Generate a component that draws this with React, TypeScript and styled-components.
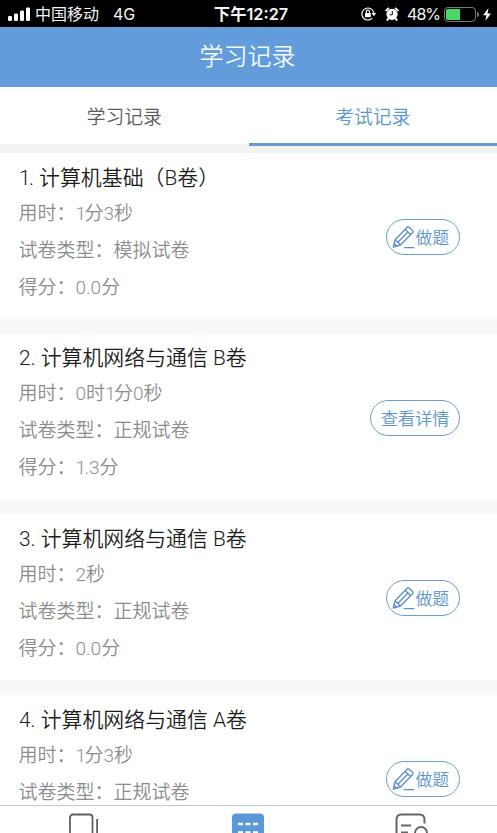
import React from 'react';
import styled, { createGlobalStyle } from 'styled-components';

const BLUE = '#629cdb';

const GlobalStyle = createGlobalStyle`
  * { box-sizing: border-box; }
  body { margin: 0; background: #fff; font-family: Roboto, "Noto Sans CJK SC", sans-serif; font-weight: 350; }
`;

const Screen = styled.div`
  width: 497px;
  height: 833px;
  overflow: hidden;
  display: flex;
  flex-direction: column;
  background: #f8f8f8;
`;

const StatusBar = styled.div`
  height: 27px;
  flex: none;
  display: grid;
  grid-template-columns: 1fr auto 1fr;
  align-items: center;
  padding: 1px 6px 0 8px;
  background: #000;
  color: #f4f4f4;
  font: 400 16px/26px Inter, "Noto Sans CJK SC", sans-serif;
`;

const StatusGroup = styled.div<{ $end?: boolean }>`
  display: flex;
  align-items: center;
  justify-content: ${p => (p.$end ? 'flex-end' : 'flex-start')};
`;

const Carrier = styled.span`
  margin: 0 14px 0 5px;
`;

const Clock = styled.span`
  font-weight: 600;
  font-size: 16.3px;
  padding-left: 3px;
`;

const Percent = styled.span`
  margin: 0 4px 0 8px;
  font-size: 16px;
  letter-spacing: -1px;
`;

const Battery = styled.div`
  width: 32px;
  height: 15px;
  padding: 1px;
  border: 1px solid #777;
  border-radius: 4px;
`;

const Charge = styled.div`
  width: 14px;
  height: 11px;
  border-radius: 2px 0 0 2px;
  background: #4cd864;
`;

const BatteryTip = styled.div`
  width: 2px;
  height: 5px;
  margin: 0 4px 0 1px;
  border-radius: 0 2px 2px 0;
  background: #777;
`;

const Header = styled.header`
  height: 60px;
  flex: none;
  padding-right: 2px;
  text-align: center;
  background: ${BLUE};
  color: #f4fbff;
  font-size: 24px;
  line-height: 60.5px;
`;

const Tabs = styled.nav`
  height: 66px;
  flex: none;
  display: grid;
  grid-template-columns: 1fr 1fr;
  background: #f2f2f2;
`;

const Tab = styled.div<{ $active?: boolean }>`
  height: ${p => (p.$active ? 59 : 57)}px;
  background: #fff;
  border-bottom: ${p => (p.$active ? '3px solid #689bcf' : '0')};
  color: ${p => (p.$active ? '#5b98d0' : '#5c5c5c')};
  font-size: 18.8px;
  line-height: 62px;
  text-align: center;
`;

const List = styled.main`
  flex: 1;
  min-height: 0;
  overflow: hidden;
  display: flex;
  flex-direction: column;
  gap: 14.7px;
`;

const Card = styled.article`
  height: 166px;
  flex: none;
  display: flex;
  justify-content: space-between;
  align-items: center;
  padding: 0 37px 0 18.5px;
  background: #fff;
`;

const Info = styled.div`
  align-self: flex-start;
  white-space: nowrap;
`;

const Title = styled.h2`
  margin: 8.5px 0 0 0.5px;
  height: 33px;
  font-size: 20.9px;
  line-height: 32px;
  font-weight: 350;
  color: #1c1c1c;
`;

const Line = styled.div`
  height: 37px;
  font-size: 19px;
  line-height: 37px;
  color: #8c8c8c;
`;

const NarrowOne = styled.span`
  letter-spacing: -1.6px;
`;

const ActionButton = styled.button`
  height: 36px;
  display: flex;
  align-items: center;
  margin-top: 2px;
  padding: 0 10px 0 5px;
  border: 1.5px solid #6d9fd2;
  border-radius: 18px;
  background: #fff;
  color: #5b95cf;
  font: 350 16.8px/32px "Noto Sans CJK SC", sans-serif;
`;

const DetailButton = styled(ActionButton)`
  padding: 0 9.5px;
  font-size: 17.2px;
`;

const BottomBar = styled.footer`
  height: 28px;
  flex: none;
  display: grid;
  grid-template-columns: repeat(3, 1fr);
  justify-items: center;
  padding: 7px 2px 0 2px;
  border-top: 1px solid #c5c5c5;
  background: #fff;
  overflow: hidden;
`;

const Signal = () => (
  <svg width="22" height="14" viewBox="0 0 22 14" fill="#fff">
    <rect x="0" y="9" width="4" height="5" rx="1.2" />
    <rect x="6" y="6.5" width="4" height="7.5" rx="1.2" />
    <rect x="12" y="3.5" width="4" height="10.5" rx="1.2" />
    <rect x="18" y="0.5" width="4" height="13.5" rx="1.2" />
  </svg>
);

const RotationLock = () => (
  <svg width="16" height="14" viewBox="0 0 16 14" fill="none" stroke="#fff" strokeWidth="1.2">
    <path d="M12.8 6A6 6 0 1 0 11.2 11.2" />
    <path d="M10.5 6H15.2L12.8 9.2Z" fill="#fff" stroke="none" />
    <rect x="4" y="6" width="5.8" height="4.3" rx=".5" fill="#fff" stroke="none" />
    <path d="M5.3 6V4.8a1.6 1.6 0 0 1 3.2 0V6" />
  </svg>
);

const AlarmSvg = styled.svg`
  margin-left: 8px;
`;

const Alarm = () => (
  <AlarmSvg width="14" height="14" viewBox="0 0 14 14" fill="none">
    <circle cx="7" cy="7.3" r="5.6" fill="#fff" />
    <path d="M1.2 3.4 3.4 1.4M12.8 3.4 10.6 1.4M3.4 11.5 2.4 12.9M10.6 11.5 11.6 12.9" stroke="#fff" strokeWidth="1.9" strokeLinecap="round" />
    <path d="M7.3 4v3.8H4.6" stroke="#000" strokeWidth="1" />
  </AlarmSvg>
);

const Bolt = () => (
  <svg width="8" height="13" viewBox="0 0 8 13" fill="#fff">
    <path d="M5.5 0 0 7.3h3.5L2.2 13 8 5.4H4.5Z" />
  </svg>
);

const Pencil = () => (
  <svg width="23" height="24" viewBox="0 0 23 24" fill="none" stroke="#5d91c7" strokeWidth="1.4" strokeLinejoin="round">
    <path d="M1.3 22 3.1 14.8 15.2 2.2Q16 1.4 17 2.2L20.8 5.6Q21.6 6.6 20.7 7.5L8.5 20Z" />
    <path d="M3.1 14.8 8.5 20M13.2 4.4l5.4 5.2M6 17.2 15.8 6.9M2 18.5l2.8 2.7M11.8 22.6h10.4" />
  </svg>
);

const BooksIcon = () => (
  <svg width="30" height="21" viewBox="0 0 30 21" fill="none" stroke="#606060" strokeWidth="1.8">
    <rect x="1" y="1.5" width="22.5" height="32" rx="3" />
    <path d="M28.1 6v24" />
  </svg>
);

const GridIcon = () => (
  <svg width="32" height="21" viewBox="0 0 32 21">
    <rect y=".5" width="32" height="32" rx="4" fill="#5b98da" />
    <path d="M6 11h5M13.5 11h5M21 11h5M6 19.5h5M13.5 19.5h5M21 19.5h5" stroke="#fff" strokeWidth="2.7" />
  </svg>
);

const ProfileIcon = () => (
  <svg width="35" height="21" viewBox="0 0 35 21" fill="none" stroke="#666" strokeWidth="2">
    <path d="M1.5 30V6.5Q1.5 1.5 6.5 1.5H24.5Q29.5 1.5 29.5 6.5V10.5M6 12.5h10M6 19.5h7" />
    <circle cx="26" cy="20" r="6" />
  </svg>
);

// Digit "1" is set tighter than the other figures.
const Figures = ({ text }: { text: string }) => (
  <>
    {text.split(/(1)/).map((part, i) => (part === '1' ? <NarrowOne key={i}>1</NarrowOne> : part))}
  </>
);

interface ExamRecord {
  title: string;
  time: string;
  type: string;
  score?: string;
  detail?: boolean;
}

const records: ExamRecord[] = [
  { title: '1. 计算机基础（B卷）', time: '1分3秒', type: '模拟试卷', score: '0.0分' },
  { title: '2. 计算机网络与通信 B卷', time: '0时1分0秒', type: '正规试卷', score: '1.3分', detail: true },
  { title: '3. 计算机网络与通信 B卷', time: '2秒', type: '正规试卷', score: '0.0分' },
  { title: '4. 计算机网络与通信 A卷', time: '1分3秒', type: '正规试卷' },
];

export default function App() {
  return (
    <Screen>
      <GlobalStyle />
      <StatusBar>
        <StatusGroup>
          <Signal />
          <Carrier>中国移动</Carrier>
          <span>4G</span>
        </StatusGroup>
        <Clock>下午12:27</Clock>
        <StatusGroup $end>
          <RotationLock />
          <Alarm />
          <Percent>48%</Percent>
          <Battery><Charge /></Battery>
          <BatteryTip />
          <Bolt />
        </StatusGroup>
      </StatusBar>
      <Header>学习记录</Header>
      <Tabs>
        <Tab>学习记录</Tab>
        <Tab $active>考试记录</Tab>
      </Tabs>
      <List>
        {records.map(r => (
          <Card key={r.title}>
            <Info>
              <Title><Figures text={r.title} /></Title>
              <Line>用时：<Figures text={r.time} /></Line>
              <Line>试卷类型：{r.type}</Line>
              {r.score && <Line>得分：<Figures text={r.score} /></Line>}
            </Info>
            {r.detail ? (
              <DetailButton>查看详情</DetailButton>
            ) : (
              <ActionButton><Pencil />做题</ActionButton>
            )}
          </Card>
        ))}
      </List>
      <BottomBar>
        <BooksIcon />
        <GridIcon />
        <ProfileIcon />
      </BottomBar>
    </Screen>
  );
}
